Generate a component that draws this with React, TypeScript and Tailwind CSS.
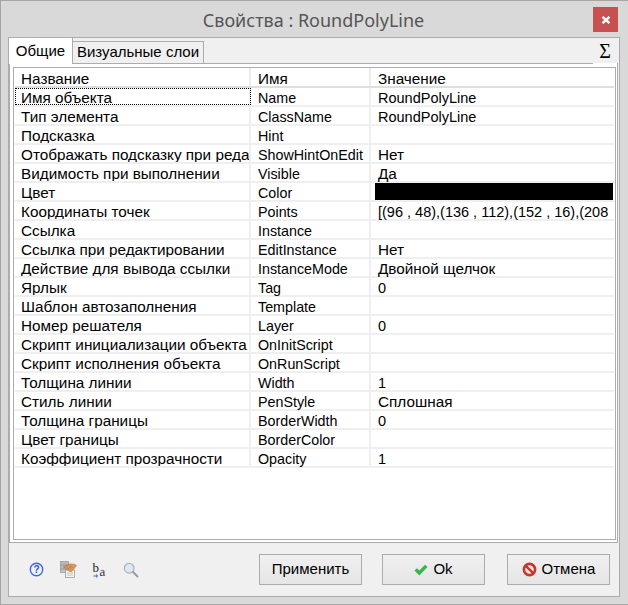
const rows: [string, string, string][] = [
  ["Имя объекта", "Name", "RoundPolyLine"],
  ["Тип элемента", "ClassName", "RoundPolyLine"],
  ["Подсказка", "Hint", ""],
  ["Отображать подсказку при реда", "ShowHintOnEdit", "Нет"],
  ["Видимость при выполнении", "Visible", "Да"],
  ["Цвет", "Color", "#black"],
  ["Координаты точек", "Points", "[(96 , 48),(136 , 112),(152 , 16),(208"],
  ["Ссылка", "Instance", ""],
  ["Ссылка при редактировании", "EditInstance", "Нет"],
  ["Действие для вывода ссылки", "InstanceMode", "Двойной щелчок"],
  ["Ярлык", "Tag", "0"],
  ["Шаблон автозаполнения", "Template", ""],
  ["Номер решателя", "Layer", "0"],
  ["Скрипт инициализации объекта", "OnInitScript", ""],
  ["Скрипт исполнения объекта", "OnRunScript", ""],
  ["Толщина линии", "Width", "1"],
  ["Стиль линии", "PenStyle", "Сплошная"],
  ["Толщина границы", "BorderWidth", "0"],
  ["Цвет границы", "BorderColor", ""],
  ["Коэффициент прозрачности", "Opacity", "1"],
];

function HelpIcon() {
  return (
    <svg width="15" height="15" viewBox="0 0 15 15" className="mr-[1px]">
      <circle cx="7.5" cy="7.5" r="6.2" fill="#eef2ff" stroke="#3f66e0" strokeWidth="1.4" />
      <text x="7.5" y="11" textAnchor="middle" fontSize="10" fontWeight="700" fill="#2f50c8" fontFamily="Liberation Sans">?</text>
    </svg>
  );
}

function HandIcon() {
  return (
    <svg width="17" height="17" viewBox="0 0 17 17">
      <rect x="0.5" y="0.5" width="8" height="3" fill="#b8b8b8" stroke="#8a8a8a" strokeWidth="0.6" />
      <rect x="0.5" y="4.5" width="8" height="3" fill="#b8b8b8" stroke="#8a8a8a" strokeWidth="0.6" />
      <rect x="0.5" y="8.5" width="8" height="3" fill="#c4c4c4" stroke="#8a8a8a" strokeWidth="0.6" />
      <rect x="5.5" y="9" width="9" height="7.5" fill="#f6f6f0" stroke="#8f8f8f" strokeWidth="0.7" />
      <path d="M7.5 12h5M7.5 14h5" stroke="#707070" strokeWidth="0.8" strokeDasharray="1 1" />
      <path d="M3.5 6 L9.5 3 L14 3.2 L16.5 4.6 L14 7.5 L11.5 10.5 L8.5 10 L6.5 8 Z" fill="#dc9a5c" stroke="#a56a36" strokeWidth="0.6" />
      <path d="M6.5 6l3 2.5M8.5 5l3 2.5M10.5 4.5l2 2" stroke="#a86c36" strokeWidth="0.7" />
    </svg>
  );
}

function SortIcon() {
  return (
    <svg width="16" height="16" viewBox="0 0 16 16" className="overflow-visible">
      <text x="0.5" y="9.5" fontSize="13" fontFamily="Liberation Serif" fill="#222">b</text>
      <text x="7.5" y="13.5" fontSize="13" fontFamily="Liberation Serif" fill="#333">a</text>
      <path d="M1.5 14h4M4 12.5l1.6 1.5L4 15.5" fill="none" stroke="#2f5fd0" strokeWidth="1" />
    </svg>
  );
}

function SearchIcon() {
  return (
    <svg width="16" height="16" viewBox="0 0 16 16">
      <circle cx="6.2" cy="6.2" r="4.9" fill="#dfe8f2" stroke="#a9b2bb" strokeWidth="1.2" />
      <path d="M10 10l4.5 4.5" stroke="#9a9a9a" strokeWidth="2" strokeLinecap="round" />
    </svg>
  );
}

function CheckIcon() {
  return (
    <svg width="14" height="12" viewBox="0 0 14 12">
      <path d="M0.5 6.5 L3 4.2 L5.3 6.6 L11 0.8 L13.5 3 L5.3 11.5 Z" fill="#39b54a" />
    </svg>
  );
}

function CancelIcon() {
  return (
    <svg width="15" height="15" viewBox="0 0 15 15">
      <circle cx="7.5" cy="7.5" r="5.6" fill="#f4e8e6" stroke="#c8352b" strokeWidth="2.6" />
      <path d="M3.8 3.8l7.4 7.4" stroke="#c8352b" strokeWidth="2.4" />
    </svg>
  );
}

function ActionButton({ children }: { children: React.ReactNode }) {
  return (
    <button className="w-[103px] h-[31px] flex items-center justify-center gap-[5px] border border-[#acacac] bg-gradient-to-b from-[#f0f0f0] to-[#e5e5e5] text-[15px] text-black">
      {children}
    </button>
  );
}

export default function App() {
  return (
    <div className="w-[628px] h-[605px] bg-[#d9d9d9] border border-r-0 border-[#a6a6a6] flex flex-col overflow-hidden font-['Liberation_Sans',sans-serif] text-[15.3px] text-black">
      <div className="h-[36px] shrink-0 flex relative">
        <div className="flex-1 flex items-center justify-center pt-[3px] pr-[2px] font-['Noto_Sans',sans-serif] text-[18px] text-[#555555]">
          Свойства : RoundPolyLine
        </div>
        <button className="absolute right-[10px] top-[6px] w-[25px] h-[25px] bg-[#c75050] flex items-center justify-center">
          <svg width="10" height="8" viewBox="0 0 10 8">
            <path d="M1.5 0.8 L8.5 7.2 M8.5 0.8 L1.5 7.2" stroke="#fff" strokeWidth="2.4" />
          </svg>
        </button>
      </div>

      <div className="ml-[7px] mr-[8px] h-[560px] border border-[#acacac] bg-[#f0f0f0] flex flex-col">
        <div className="h-[25px] shrink-0 flex relative">
          <div className="w-[64px] h-[26px] -mb-px bg-white border-r border-[#acacac] flex items-center justify-center relative z-10 text-[15px]">
            Общие
          </div>
          <div className="w-[131px] h-[22px] mt-[3px] bg-[#f0f0f0] border border-l-0 border-b-0 border-[#acacac] flex items-center justify-center text-[15px]">
            Визуальные слои
          </div>
          <div className="ml-auto mr-[2px] w-[24px] h-[26px] -mb-px border-b border-white flex items-center justify-center font-['Liberation_Serif',serif] text-[20px] relative z-10">
            Σ
          </div>
        </div>

        <div className="mr-[1px] h-[480px] border border-[#acacac] bg-white pt-[3px] pl-[3px] pr-[1px] pb-[2px] flex">
          <div className="flex-1 border border-[#acacac] pl-[1px] pr-[1px] overflow-hidden">
            <div className="flex h-[20px] border-b-2 border-[#dedede]">
              <div className="w-[236px] pl-[6px] border-r-2 border-[#ececec] leading-[21px]">Название</div>
              <div className="w-[120px] pl-[7px] border-r-2 border-[#ececec] leading-[21px]">Имя</div>
              <div className="flex-1 pl-[7px] leading-[21px]">Значение</div>
            </div>
            {rows.map(([label, name, value], i) => {
              const isCyrillic = /[а-яА-Я]/.test(value);
              return (
                <div key={name} className="flex h-[19px] border-b-2 border-[#efefef]">
                  <div className={`w-[236px] pl-[6px] border-r-2 border-[#efefef] leading-[19px] whitespace-nowrap ${i === 0 ? "outline-1 outline-dotted outline-black -outline-offset-1" : ""}`}>
                    <div className="h-[17px] overflow-hidden">{label}</div>
                  </div>
                  <div className="w-[120px] pl-[7px] pt-[1px] border-r-2 border-[#efefef] leading-[19px] whitespace-nowrap text-[14.3px]">{name}</div>
                  {value === "#black" ? (
                    <div className="flex-1 pl-[4px] pr-[1px]">
                      <div className="h-[17px] bg-black" />
                    </div>
                  ) : (
                    <div className={`flex-1 pl-[7px] leading-[19px] whitespace-nowrap ${isCyrillic ? "" : "pt-[1px] text-[14.5px]"}`}>{value}</div>
                  )}
                </div>
              );
            })}
          </div>
        </div>

        <div className="flex-1 flex items-center pl-[20px] pr-[9px]">
          <div className="flex items-center gap-[15px]">
            <HelpIcon />
            <HandIcon />
            <SortIcon />
            <SearchIcon />
          </div>
          <div className="ml-auto flex items-center">
            <ActionButton>Применить</ActionButton>
            <div className="w-[20px]" />
            <ActionButton><CheckIcon />Ok</ActionButton>
            <div className="w-[22px]" />
            <ActionButton><CancelIcon />Отмена</ActionButton>
          </div>
        </div>
      </div>
    </div>
  );
}
